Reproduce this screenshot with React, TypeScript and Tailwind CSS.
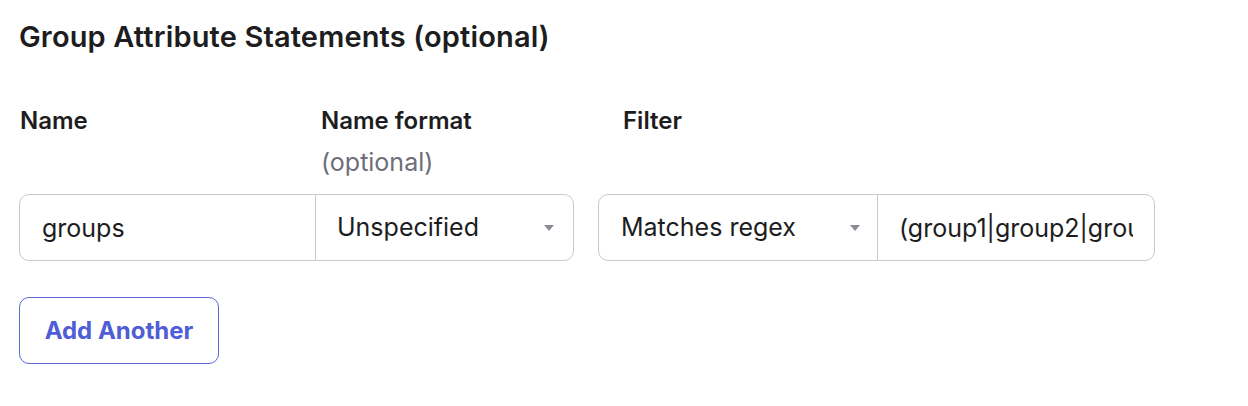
import { useState } from "react";

function Caret() {
  return (
    <svg width="12" height="8" viewBox="0 0 12 8" className="shrink-0">
      <path d="M1 1h10L6 7z" fill="#8c8c96" />
    </svg>
  );
}

export default function App() {
  const [name, setName] = useState("groups");
  const [filterValue, setFilterValue] = useState("(group1|group2|group3)");

  return (
    <div className="w-[1248px] h-[406px] bg-white text-[#1d1d21] font-['Inter','Noto_Sans',sans-serif]">
      <div className="pl-[19px] pt-[20px]">
        <h2 className="text-[29px] leading-[34px] font-semibold tracking-[0.15px]">
          Group Attribute Statements (optional)
        </h2>

        <div className="mt-[51px] flex">
          <div className="w-[302px] pl-px text-[24px] leading-[32px] font-semibold">Name</div>
          <div className="w-[302px]">
            <div className="text-[24px] leading-[32px] font-semibold">Name format</div>
            <div className="mt-[9px] text-[25px] leading-[32px] text-[#6e6e78]">(optional)</div>
          </div>
          <div className="text-[24px] leading-[32px] font-semibold">Filter</div>
        </div>

        <div className="mt-[16px] flex items-center">
          <div className="flex">
            <input
              value={name}
              onChange={(e) => setName(e.target.value)}
              className="w-[297px] h-[67px] px-[22px] text-[25px] border border-[#c9c9cf] rounded-l-[10px] outline-none bg-white"
            />
            <div className="w-[259px] h-[67px] -ml-px flex items-center justify-between pl-[21px] pr-[18px] text-[25px] border border-[#c9c9cf] rounded-r-[10px] bg-white">
              <span>Unspecified</span>
              <Caret />
            </div>
          </div>

          <div className="ml-[24px] flex">
            <div className="w-[280px] h-[67px] flex items-center justify-between pl-[22px] pr-[16px] text-[25px] border border-[#c9c9cf] rounded-l-[10px] bg-white">
              <span>Matches regex</span>
              <Caret />
            </div>
            <input
              value={filterValue}
              onChange={(e) => setFilterValue(e.target.value)}
              className="w-[278px] h-[67px] -ml-px px-[21px] text-[25px] border border-[#c9c9cf] rounded-r-[10px] outline-none bg-white"
            />
          </div>
        </div>

        <button className="mt-[36px] w-[200px] h-[67px] border border-[#5b68d8] rounded-[10px] text-[24px] font-bold text-[#4f5dd6] bg-white">
          Add Another
        </button>
      </div>
    </div>
  );
}
